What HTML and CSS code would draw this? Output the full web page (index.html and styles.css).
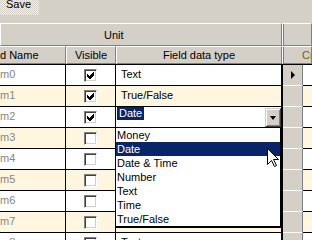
FILE: index.html
```html
<!DOCTYPE html>
<html lang="en">
<head>
    <meta charset="UTF-8">
    <meta name="viewport" content="width=device-width, initial-scale=1.0">
    <title>Units</title>
    <link rel="stylesheet" href="styles.css">
</head>
<body>
    <div class="app">
        <div class="toolbar">
            <span class="save">Save</span>
        </div>

        <div class="bands">
            <div class="hcell band-unit">Unit</div>
            <div class="hcell band-next"></div>
        </div>

        <div class="heads">
            <div class="hcell c-name">d Name</div>
            <div class="hcell c-vis center">Visible</div>
            <div class="hcell c-type center">Field data type</div>
            <div class="hcell c-more">Cr</div>
        </div>

        <div class="rows">
            <div class="row">
                <div class="cell c-name">m0</div>
                <div class="cell c-vis"><span class="chk"><svg viewBox="0 0 7 7" width="7" height="7"><polygon points="0,2 2,4 6,0 7,0 7,3 3,7 2,7 0,5"/></svg></span></div>
                <div class="cell c-type">Text</div>
                <div class="cell c-sel"><span class="pointer"></span></div>
                <div class="cell c-rest"></div>
            </div>
            <div class="row alt">
                <div class="cell c-name">m1</div>
                <div class="cell c-vis"><span class="chk"><svg viewBox="0 0 7 7" width="7" height="7"><polygon points="0,2 2,4 6,0 7,0 7,3 3,7 2,7 0,5"/></svg></span></div>
                <div class="cell c-type">True/False</div>
                <div class="cell c-sel"></div>
                <div class="cell c-rest"></div>
            </div>
            <div class="row">
                <div class="cell c-name">m2</div>
                <div class="cell c-vis"><span class="chk"><svg viewBox="0 0 7 7" width="7" height="7"><polygon points="0,2 2,4 6,0 7,0 7,3 3,7 2,7 0,5"/></svg></span></div>
                <div class="cell c-type edit">
                    <span class="sel-text">Date</span>
                    <span class="combo-btn"><span class="arrow"></span></span>
                </div>
                <div class="cell c-sel"></div>
                <div class="cell c-rest"></div>
            </div>
            <div class="row alt">
                <div class="cell c-name">m3</div>
                <div class="cell c-vis"><span class="chk"></span></div>
                <div class="cell c-type"></div>
                <div class="cell c-sel"></div>
                <div class="cell c-rest"></div>
            </div>
            <div class="row">
                <div class="cell c-name">m4</div>
                <div class="cell c-vis"><span class="chk"></span></div>
                <div class="cell c-type"></div>
                <div class="cell c-sel"></div>
                <div class="cell c-rest"></div>
            </div>
            <div class="row alt">
                <div class="cell c-name">m5</div>
                <div class="cell c-vis"><span class="chk"></span></div>
                <div class="cell c-type"></div>
                <div class="cell c-sel"></div>
                <div class="cell c-rest"></div>
            </div>
            <div class="row">
                <div class="cell c-name">m6</div>
                <div class="cell c-vis"><span class="chk"></span></div>
                <div class="cell c-type"></div>
                <div class="cell c-sel"></div>
                <div class="cell c-rest"></div>
            </div>
            <div class="row alt">
                <div class="cell c-name">m7</div>
                <div class="cell c-vis"><span class="chk"></span></div>
                <div class="cell c-type"></div>
                <div class="cell c-sel"></div>
                <div class="cell c-rest"></div>
            </div>
            <div class="row">
                <div class="cell c-name">m8</div>
                <div class="cell c-vis"><span class="chk"></span></div>
                <div class="cell c-type">Text</div>
                <div class="cell c-sel"></div>
                <div class="cell c-rest"></div>
            </div>
        </div>

        <!-- open combo list of row m2 -->
        <div class="droplist">
            <div class="opt">Money</div>
            <div class="opt on">Date</div>
            <div class="opt">Date &amp; Time</div>
            <div class="opt">Number</div>
            <div class="opt">Text</div>
            <div class="opt">Time</div>
            <div class="opt">True/False</div>
        </div>

        <svg class="cursor" width="13" height="20" viewBox="0 0 13 20">
            <path d="M0.5 0.5 L0.5 16.5 L4.5 12.5 L7.5 18.5 L9.5 17.5 L6.5 11.5 L11.5 11.5 Z" fill="#fff" stroke="#000" stroke-width="1"/>
        </svg>
    </div>
</body>
</html>
```

FILE: styles.css
```css
*{
    padding: 0;
    margin: 0;
    box-sizing: border-box;
}

body{
    background-color: #d4d0c8;
    font-family: "Liberation Sans", Arial, sans-serif;
    font-size: 11px;
    line-height: 13px;
    color: #000;
    overflow: hidden;
}
.app{
    position: relative;
    width: 312px;
    height: 240px;
    overflow: hidden;
}

/* toolbar */
.toolbar{
    height: 23px;
    display: flex;
    align-items: flex-start;
}
.save{
    display: block;
    height: 15px;
    line-height: 9px;
    padding: 0 8px 0 6px;
    background-image: repeating-conic-gradient(#f2f0ec 0 25%, #d4d0c8 0 50%);
    background-size: 2px 2px;
}

/* header cells */
.hcell{
    background-color: #d4d0c8;
    border-top: 1px solid #fff;
    border-left: 1px solid #fff;
    border-right: 1px solid #808080;
    border-bottom: 1px solid #808080;
    white-space: nowrap;
    overflow: hidden;
}
.center{
    text-align: center;
}
.bands{
    display: flex;
    height: 23px;
}
.band-unit{
    width: 282px;
    padding: 5px 0 0 103px;
}
.band-next{
    flex: 1;
    box-shadow: inset 1px 0 #808080;
}
.heads{
    display: flex;
    height: 18px;
}
.heads .hcell{
    padding-top: 2px;
}
.heads .c-name{
    border-left: none;
}
.heads .c-type{
    width: 166px;
}
.c-more{
    flex: 1;
    padding-left: 19px;
    color: #7b5a16;
    box-shadow: inset 1px 0 #808080;
}

/* columns */
.c-name{
    width: 66px;
}
.c-vis{
    width: 50px;
}
.c-type{
    width: 167px;
}
.c-sel{
    width: 20px;
}
.c-rest{
    flex: 1;
}

/* data rows */
.rows{
    border-top: 1px solid #000;
}
.row{
    display: flex;
    height: 21px;
    background-color: #fff;
}
.row.alt{
    background-color: #fff6e0;
}
.cell{
    height: 21px;
    padding-top: 3px;
    border-bottom: 1px solid #000;
    white-space: nowrap;
    overflow: hidden;
}
.row .c-name{
    color: #868686;
    border-right: 1px solid #000;
}
.row .c-vis{
    display: flex;
    justify-content: center;
    padding-top: 4px;
    border-right: 1px solid #000;
}
.row .c-type{
    padding-left: 5px;
    border-right: 2px solid #000;
}
.row .c-sel{
    display: flex;
    align-items: center;
    justify-content: center;
    padding-top: 0;
    background-color: #d4d0c8;
    border-bottom: 1px solid #fff;
    border-right: 1px solid #808080;
}

.chk{
    display: flex;
    align-items: center;
    justify-content: center;
    width: 13px;
    height: 13px;
    background-color: #fff;
    border: 1px solid;
    border-color: #808080 #fff #fff #808080;
    box-shadow: inset 1px 1px #404040, inset -1px -1px #d4d0c8;
}
.chk svg{
    shape-rendering: crispEdges;
    fill: #000;
}
.pointer{
    width: 0;
    height: 0;
    border-left: 4px solid #000;
    border-top: 4px solid transparent;
    border-bottom: 4px solid transparent;
}

/* combo editor */
.row .c-type.edit{
    display: flex;
    align-items: flex-start;
    justify-content: space-between;
    padding: 0 0 0 1px;
    background-color: #fff;
}
.sel-text{
    background-color: #0a246a;
    color: #fff;
    padding: 0 2px;
    line-height: 13px;
}
.combo-btn{
    display: flex;
    align-items: center;
    justify-content: center;
    width: 16px;
    height: 19px;
    margin-top: 1px;
    background-color: #d4d0c8;
    border: 1px solid;
    border-color: #d4d0c8 #404040 #404040 #d4d0c8;
    box-shadow: inset 1px 1px #fff, inset -1px -1px #808080;
}
.arrow{
    width: 0;
    height: 0;
    border-top: 4px solid #000;
    border-left: 3px solid transparent;
    border-right: 3px solid transparent;
}

/* open dropdown list */
.droplist{
    position: absolute;
    left: 115px;
    top: 127px;
    width: 166px;
    background-color: #fff;
    border: 1px solid #000;
    border-bottom-width: 2px;
}
.opt{
    height: 14px;
    line-height: 14px;
    padding-left: 1px;
    white-space: nowrap;
}
.opt.on{
    background-color: #0a246a;
    color: #fff;
}

.cursor{
    position: absolute;
    left: 267px;
    top: 148px;
}
```
